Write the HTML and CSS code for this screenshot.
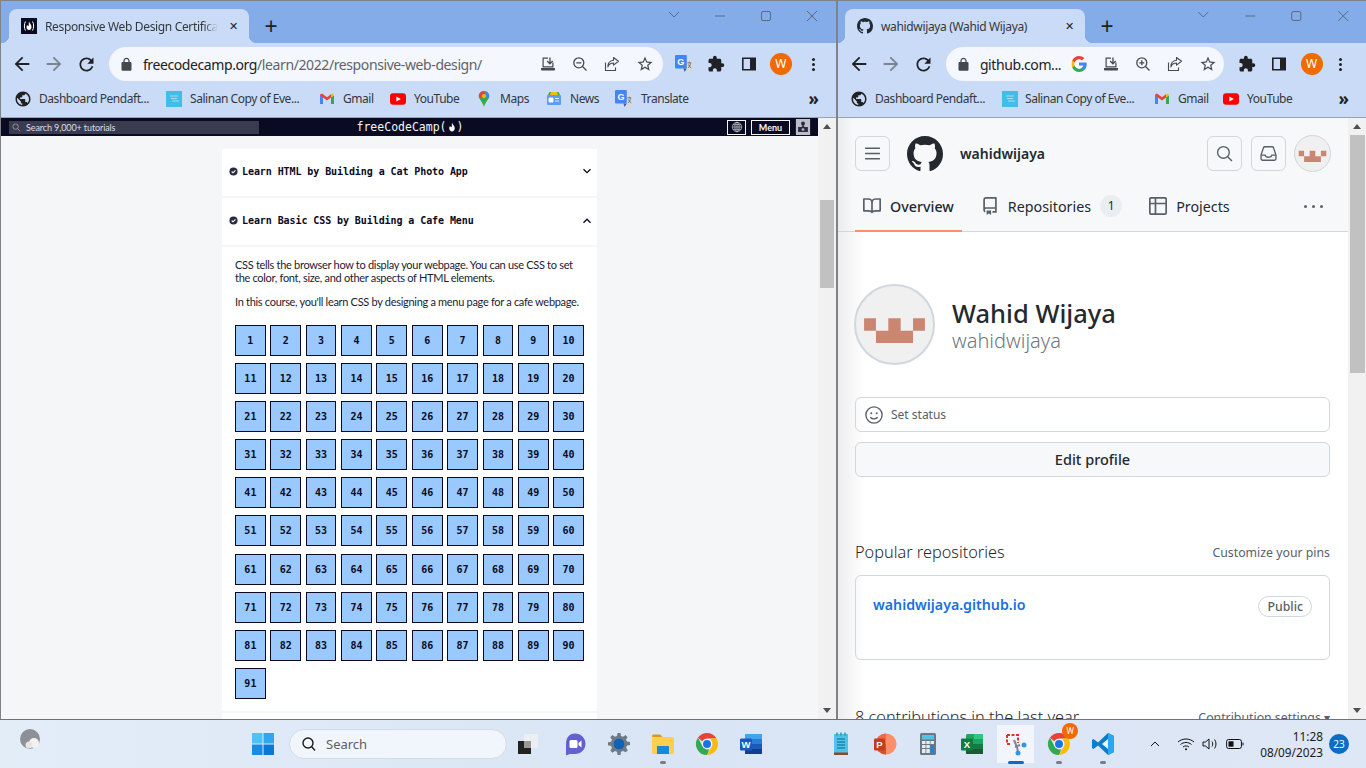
FILE: index.html
```html
<!DOCTYPE html>
<html lang="en">
  <head>
    <meta charset="utf-8" />
    <meta name="viewport" content="width=device-width, initial-scale=1" />
    <title>Desktop</title>
    <link rel="stylesheet" href="styles.css">
  </head>
  <body>
    <!-- shared icons, used by both browser windows and the taskbar -->
    <svg class="defs" aria-hidden="true">
      <symbol id="i-back" viewBox="0 0 24 24"><path d="M20 11H7.83l5.59-5.59L12 4l-8 8 8 8 1.41-1.41L7.83 13H20v-2z"/></symbol>
      <symbol id="i-forward" viewBox="0 0 24 24"><path d="M4 11h12.17l-5.59-5.59L12 4l8 8-8 8-1.41-1.41L16.17 13H4v-2z"/></symbol>
      <symbol id="i-reload" viewBox="0 0 24 24"><path d="M17.65 6.35C16.2 4.9 14.21 4 12 4c-4.42 0-7.99 3.58-7.99 8s3.57 8 7.99 8c3.73 0 6.84-2.55 7.73-6h-2.08c-.82 2.33-3.04 4-5.65 4-3.31 0-6-2.69-6-6s2.69-6 6-6c1.66 0 3.14.69 4.22 1.78L13 11h7V4l-2.35 2.35z"/></symbol>
      <symbol id="i-lock" viewBox="0 0 24 24"><path d="M18 8h-1V6c0-2.76-2.24-5-5-5S7 3.24 7 6v2H6c-1.1 0-2 .9-2 2v10c0 1.1.9 2 2 2h12c1.1 0 2-.9 2-2V10c0-1.1-.9-2-2-2zM9 6c0-1.66 1.34-3 3-3s3 1.34 3 3v2H9V6z"/></symbol>
      <symbol id="i-star" viewBox="0 0 24 24"><path d="M22 9.24l-7.19-.62L12 2 9.19 8.63 2 9.24l5.46 4.73L5.82 21 12 17.27 18.18 21l-1.63-7.03L22 9.24zM12 15.4l-3.76 2.27 1-4.28-3.32-2.88 4.38-.38L12 6.1l1.71 4.04 4.38.38-3.32 2.88 1 4.28L12 15.4z"/></symbol>
      <symbol id="i-puzzle" viewBox="0 0 24 24"><path d="M20.5 11H19V7c0-1.1-.9-2-2-2h-4V3.5C13 2.12 11.88 1 10.5 1S8 2.12 8 3.5V5H4c-1.1 0-1.99.9-1.99 2v3.8H3.5c1.49 0 2.7 1.21 2.7 2.7s-1.21 2.7-2.7 2.7H2V20c0 1.1.9 2 2 2h3.8v-1.5c0-1.49 1.21-2.7 2.7-2.7 1.49 0 2.7 1.21 2.7 2.7V22H17c1.1 0 2-.9 2-2v-4h1.5c1.38 0 2.5-1.12 2.5-2.5S21.88 11 20.5 11z"/></symbol>
      <symbol id="i-panel" viewBox="0 0 16 16"><path fill-rule="evenodd" d="M1 1.5h14v13H1zM2.6 3.1v9.8H9V3.1z"/></symbol>
      <symbol id="i-install" viewBox="0 0 16 16"><path d="M2.5 1.5H8v1.2H3.7v7.6h8.6V6.5h1.2v5H2.5z"/><path d="M1 12h14v1.2c0 .7-.5 1.3-1.2 1.3H2.2c-.7 0-1.2-.6-1.2-1.3z"/><path d="M9.3 1.5h1.3v4.7l1.6-1.6.9.9-3.2 3.2-3.2-3.2.9-.9 1.7 1.6z"/></symbol>
      <symbol id="i-zoomout" viewBox="0 0 16 16"><circle cx="6.8" cy="6.8" r="5" fill="none" stroke="currentColor" stroke-width="1.3"/><path d="M10.5 10.5l4 4M4.3 6.8h5" fill="none" stroke="currentColor" stroke-width="1.3"/></symbol>
      <symbol id="i-zoomin" viewBox="0 0 16 16"><circle cx="6.8" cy="6.8" r="5" fill="none" stroke="currentColor" stroke-width="1.3"/><path d="M10.5 10.5l4 4M4.3 6.8h5M6.8 4.3v5" fill="none" stroke="currentColor" stroke-width="1.3"/></symbol>
      <symbol id="i-share" viewBox="0 0 16 16"><path d="M1.5 6.5v8h10v-3M9.5 1.5l5 3.8-5 3.8V7C6.5 7 4.8 8.3 3.8 11c0-4 2-6.3 5.7-6.7z" fill="none" stroke="currentColor" stroke-width="1.1" stroke-linejoin="round"/></symbol>
      <symbol id="i-globe" viewBox="0 0 24 24"><path d="M12 2C6.48 2 2 6.48 2 12s4.48 10 10 10 10-4.48 10-10S17.52 2 12 2zm-1 17.93c-3.95-.49-7-3.85-7-7.93 0-.62.08-1.21.21-1.79L9 15v1c0 1.1.9 2 2 2v1.93zm6.9-2.54c-.26-.81-1-1.39-1.9-1.39h-1v-3c0-.55-.45-1-1-1H8v-2h2c.55 0 1-.45 1-1V7h2c1.1 0 2-.9 2-2v-.41c2.93 1.19 5 4.06 5 7.41 0 2.08-.8 3.97-2.1 5.39z"/></symbol>
      <symbol id="i-poster" viewBox="0 0 16 16"><rect width="16" height="16" fill="#40bde8"/><path d="M4 5h8M5 7.5h6M6 10h7" stroke="#a5e0f3" stroke-width="1"/></symbol>
      <symbol id="i-gmail" viewBox="0 0 16 16"><path d="M1 13V4l3 2v7z" fill="#4285f4"/><path d="M12 13V6l3-2v9z" fill="#34a853"/><path d="M1 4.5C1 2.8 2.7 2.2 4 3.2L8 6.2 12 3.2V6.4L8 9.4 4 6.4 1 4.5z" fill="#ea4335"/><path d="M12 3.2c1.3-1 3-.4 3 1.3L12 6.4z" fill="#fbbc04"/></symbol>
      <symbol id="i-youtube" viewBox="0 0 16 16"><rect y="2.2" width="16" height="11.6" rx="3" fill="#f00"/><path d="M6.4 5.4L10.8 8l-4.4 2.6z" fill="#fff"/></symbol>
      <symbol id="i-maps" viewBox="0 0 16 16"><path d="M8 0c3 0 5.2 2.2 5.2 5 0 3.5-3.8 5.5-5.2 11C6.6 10.500 2.800 8.500 2.800 5 2.800 2.200 5 0 8 0z" fill="#34a853"/><path d="M3.600 2.500C4.500 1 6.200 0 8 0l2 2-5.500 5.500C3.500 6.700 2.800 6 2.800 5c0-.9.300-1.800.8-2.500z" fill="#ea4335"/><path d="M10 .4c1.900.7 3.200 2.500 3.200 4.600 0 1-.3 1.800-.8 2.600L8 3z" fill="#4285f4"/><circle cx="8" cy="5" r="2" fill="#fbbc04"/></symbol>
      <symbol id="i-news" viewBox="0 0 16 16"><path d="M2 4l1.500-3h9L14 4z" fill="#34a853"/><path d="M5 1h6l1 3H4z" fill="#fbbc04"/><rect x="1" y="4" width="14" height="10" rx="1" fill="#5b9cf4"/><path d="M3 7h4v4H3zM9 7.500h4M9 10h4" fill="#fff" stroke="#fff" stroke-width=".8"/></symbol>
      <symbol id="i-translate" viewBox="0 0 16 16"><path d="M6 4h9.500v11H8z" fill="#dadada"/><rect width="10.500" height="12" rx="1" fill="#4285f4"/><text x="5.200" y="8.800" text-anchor="middle" fill="#fff" font-size="8" font-weight="700" font-family="Liberation Sans, sans-serif">G</text><path d="M7.500 12l1 3 2-3z" fill="#3b5bab"/><path d="M11 7h3.500M12.700 6v1M11.500 11.500c1.300-.8 2-2.300 2.200-4M12 8.500c.5 1.300 1.300 2.300 2.500 3" stroke="#666" stroke-width=".8" fill="none"/></symbol>
      <symbol id="i-google" viewBox="0 0 16 16"><path d="M15.700 8.200c0-.6-.1-1.100-.2-1.600H8v3h4.300c-.2 1-.7 1.800-1.600 2.400v2h2.600c1.500-1.400 2.400-3.400 2.400-5.800z" fill="#4285f4"/><path d="M8 16c2.200 0 4-.7 5.300-1.900l-2.600-2c-.7.500-1.600.8-2.700.8-2.100 0-3.900-1.400-4.500-3.300H1.300v2.100C2.600 14.300 5.100 16 8 16z" fill="#34a853"/><path d="M3.500 9.600C3.200 8.600 3.200 7.400 3.500 6.400V4.300H1.300c-.9 1.800-.9 5.600 0 7.400z" fill="#fbbc04"/><path d="M8 3.200c1.200 0 2.200.4 3 1.200l2.300-2.300C11.900.800 10.100 0 8 0 5.100 0 2.600 1.700 1.300 4.300l2.200 2.100C4.100 4.500 5.900 3.200 8 3.200z" fill="#ea4335"/></symbol>
      <symbol id="i-octocat" viewBox="0 0 16 16"><path d="M8 0C3.580 0 0 3.580 0 8c0 3.540 2.290 6.530 5.470 7.590.4.070.55-.17.55-.38 0-.19-.01-.82-.01-1.490-2.010.37-2.530-.49-2.690-.94-.09-.23-.48-.94-.82-1.130-.28-.15-.68-.52-.01-.53.63-.01 1.080.58 1.230.82.720 1.210 1.870.87 2.330.66.070-.52.280-.87.510-1.070-1.780-.2-3.640-.89-3.640-3.950 0-.87.310-1.590.820-2.150-.08-.2-.36-1.020.080-2.120 0 0 .67-.21 2.200.82.640-.18 1.320-.27 2-.27.68 0 1.360.09 2 .27 1.530-1.040 2.200-.82 2.200-.82.440 1.100.160 1.920.080 2.120.510.560.820 1.270.820 2.150 0 3.070-1.870 3.750-3.650 3.950.290.250.540.730.540 1.480 0 1.070-.01 1.930-.01 2.200 0 .21.150.46.550.38A8.013 8.013 0 0016 8c0-4.420-3.580-8-8-8z"/></symbol>
      <symbol id="i-fcc" viewBox="0 0 16 16"><rect width="16" height="16" fill="#0a0a23"/><path d="M4.500 3.500C3 5.500 3 10.500 4.500 12.500M11.500 3.500c1.500 2 1.500 7 0 9" fill="none" stroke="#fff" stroke-width="1"/><path d="M8 3.500c.5 2 2.500 3 2.500 5.500 0 1.800-1.100 3-2.500 3s-2.500-1.200-2.500-3c0-1 .5-1.800 1-2.300 0 .9.300 1.300.800 1.300C8.300 8 7.500 5.500 8 3.500z" fill="#fff"/></symbol>
      <symbol id="i-identicon" viewBox="0 0 81 81"><path d="M8.500 34H21V47H8.500zM34 34H47V47H34zM60 34H72.500V47H60zM21 47H60V60H21z" fill="#cb8671"/></symbol>
      <symbol id="i-chrome" viewBox="0 0 24 24"><path d="M12 1a11 11 0 0 1 9.500 5.500H12a5.500 5.500 0 0 0-4.800 2.800L2.900 5.800A11 11 0 0 1 12 1z" fill="#ea4335"/><path d="M21.500 6.500A11 11 0 0 1 12 23l4.800-8.300a5.500 5.500 0 0 0 0-5.400 5.500 5.500 0 0 0-2-2.800z" fill="#fbbc04"/><path d="M12 23A11 11 0 0 1 2.900 5.800l4.800 8.500a5.500 5.500 0 0 0 4.300 3.200c.8 0 1.600-.1 2.400-.5z" fill="#34a853"/><circle cx="12" cy="12" r="5" fill="#fff"/><circle cx="12" cy="12" r="4" fill="#1a73e8"/></symbol>
    </svg>

    <div class="desktop">
      <div class="windows">
        <!-- left browser window: freeCodeCamp -->
        <section class="window window-left">
          <div class="titlebar">
            <div class="tab tab-fcc">
              <svg class="tab-icon"><use href="#i-fcc"/></svg>
              <span class="tab-title">Responsive Web Design Certificat</span>
              <span class="tab-close">✕</span>
            </div>
            <span class="tab-new">+</span>
            <div class="win-controls">
              <svg class="win-btn" viewBox="0 0 46 30"><path d="M18 11l5 5 5-5"/></svg>
              <svg class="win-btn" viewBox="0 0 46 30"><path d="M18 15h10"/></svg>
              <svg class="win-btn" viewBox="0 0 46 30"><rect x="18.500" y="10.500" width="9" height="9" rx="1.500"/></svg>
              <svg class="win-btn" viewBox="0 0 46 30"><path d="M18 10l10 10M28 10l-10 10"/></svg>
            </div>
          </div>
          <div class="toolbar">
            <span class="tool"><svg class="ico-22"><use href="#i-back"/></svg></span>
            <span class="tool muted"><svg class="ico-22"><use href="#i-forward"/></svg></span>
            <span class="tool"><svg class="ico-20"><use href="#i-reload"/></svg></span>
            <div class="omnibox">
              <svg class="omni-lock"><use href="#i-lock"/></svg>
              <span class="omni-url"><b>freecodecamp.org</b>/learn/2022/responsive-web-design/</span>
              <span class="tool"><svg class="ico-16"><use href="#i-install"/></svg></span>
              <span class="tool"><svg class="ico-16"><use href="#i-zoomout"/></svg></span>
              <span class="tool"><svg class="ico-16"><use href="#i-share"/></svg></span>
              <span class="tool"><svg class="ico-18"><use href="#i-star"/></svg></span>
            </div>
            <span class="tool tool-first"><svg class="ico-18"><use href="#i-translate"/></svg></span>
            <span class="tool"><svg class="ico-18"><use href="#i-puzzle"/></svg></span>
            <span class="tool"><svg class="ico-16"><use href="#i-panel"/></svg></span>
            <span class="tool"><span class="avatar-w">W</span></span>
            <span class="tool"><span class="kebab"></span></span>
          </div>
          <div class="bookmarks">
            <span class="mark mark-globe"><svg class="ico-18"><use href="#i-globe"/></svg>Dashboard Pendaft...</span>
            <span class="mark mark-poster"><svg class="ico-16"><use href="#i-poster"/></svg>Salinan Copy of Eve...</span>
            <span class="mark mark-gmail"><svg class="ico-16"><use href="#i-gmail"/></svg>Gmail</span>
            <span class="mark mark-yt"><svg class="ico-16"><use href="#i-youtube"/></svg>YouTube</span>
            <span class="mark mark-maps"><svg class="ico-16"><use href="#i-maps"/></svg>Maps</span>
            <span class="mark mark-news"><svg class="ico-16"><use href="#i-news"/></svg>News</span>
            <span class="mark mark-tr"><svg class="ico-18"><use href="#i-translate"/></svg>Translate</span>
            <span class="marks-more">»</span>
          </div>
          <div class="page">
            <div class="fcc">
              <header class="fcc-nav">
                <div class="fcc-nav-left">
                  <div class="fcc-search">
                    <svg class="fcc-search-ico" viewBox="0 0 10 10"><circle cx="4" cy="4" r="3"/><path d="M6.300 6.300L9 9"/></svg>
                    Search 9,000+ tutorials
                  </div>
                </div>
                <div class="fcc-logo">freeCodeCamp(<svg class="fcc-flame" viewBox="0 0 10 12"><path d="M5 .5c.5 2.500 3.500 4 3.500 7 0 2.400-1.600 4-3.500 4s-3.500-1.600-3.500-4c0-1.300.7-2.300 1.300-3 0 1.200.4 1.800 1 1.800C5.500 6.300 4.500 3 5 .5z"/></svg>)</div>
                <div class="fcc-nav-right">
                  <span class="fcc-lang"><svg viewBox="0 0 14 14"><circle cx="7" cy="7" r="5.500"/><ellipse cx="7" cy="7" rx="2.500" ry="5.500"/><path d="M1.500 7h11M2.300 4.300h9.400M2.300 9.700h9.400M7 1.500v11"/></svg></span>
                  <span class="fcc-menu">Menu</span>
                  <span class="fcc-user"><svg viewBox="0 0 16 18"><rect width="16" height="18" fill="#bdbdc9"/><circle cx="8" cy="5" r="2.200" fill="#2a2a40"/><path d="M6.800 7h2.400v2H6.800zM2.500 9h11v5.500h-11z" fill="#2a2a40"/><circle cx="8" cy="11.800" r="1.500" fill="#bdbdc9"/></svg></span>
                </div>
              </header>
              <div class="fcc-body">
                <main class="panel">
                  <div class="block-head">
                    <svg class="check" viewBox="0 0 10 10"><circle cx="5" cy="5" r="4.500"/><path d="M3 5l1.500 1.500L7.200 3.700"/></svg>
                    <h4>Learn HTML by Building a Cat Photo App</h4>
                    <svg class="caret" viewBox="0 0 10 10"><path d="M1.500 3.200L5 6.700l3.500-3.500"/></svg>
                  </div>
                  <div class="block-head block-open">
                    <svg class="check" viewBox="0 0 10 10"><circle cx="5" cy="5" r="4.500"/><path d="M3 5l1.500 1.500L7.200 3.700"/></svg>
                    <h4>Learn Basic CSS by Building a Cafe Menu</h4>
                    <svg class="caret" viewBox="0 0 10 10"><path d="M1.500 6.700L5 3.200l3.500 3.500"/></svg>
                  </div>
                  <div class="block-body">
                    <p>CSS tells the browser how to display your webpage. You can use CSS to set the color, font, size, and other aspects of HTML elements.</p>
                    <p>In this course, you'll learn CSS by designing a menu page for a cafe webpage.</p>
                    <div class="steps">
                      <a>1</a><a>2</a><a>3</a><a>4</a><a>5</a><a>6</a><a>7</a><a>8</a><a>9</a><a>10</a>
                      <a>11</a><a>12</a><a>13</a><a>14</a><a>15</a><a>16</a><a>17</a><a>18</a><a>19</a><a>20</a>
                      <a>21</a><a>22</a><a>23</a><a>24</a><a>25</a><a>26</a><a>27</a><a>28</a><a>29</a><a>30</a>
                      <a>31</a><a>32</a><a>33</a><a>34</a><a>35</a><a>36</a><a>37</a><a>38</a><a>39</a><a>40</a>
                      <a>41</a><a>42</a><a>43</a><a>44</a><a>45</a><a>46</a><a>47</a><a>48</a><a>49</a><a>50</a>
                      <a>51</a><a>52</a><a>53</a><a>54</a><a>55</a><a>56</a><a>57</a><a>58</a><a>59</a><a>60</a>
                      <a>61</a><a>62</a><a>63</a><a>64</a><a>65</a><a>66</a><a>67</a><a>68</a><a>69</a><a>70</a>
                      <a>71</a><a>72</a><a>73</a><a>74</a><a>75</a><a>76</a><a>77</a><a>78</a><a>79</a><a>80</a>
                      <a>81</a><a>82</a><a>83</a><a>84</a><a>85</a><a>86</a><a>87</a><a>88</a><a>89</a><a>90</a>
                      <a>91</a>
                    </div>
                  </div>
                  <div class="block-next"></div>
                </main>
              </div>
            </div>
            <div class="scrollbar">
              <span class="sb-up"></span>
              <span class="sb-thumb sb-thumb-left"></span>
              <span class="sb-down"></span>
            </div>
          </div>
        </section>

        <!-- right browser window: GitHub profile -->
        <section class="window window-right">
          <div class="titlebar">
            <div class="tab tab-gh">
              <svg class="tab-icon"><use href="#i-octocat"/></svg>
              <span class="tab-title">wahidwijaya (Wahid Wijaya)</span>
              <span class="tab-close">✕</span>
            </div>
            <span class="tab-new">+</span>
            <div class="win-controls">
              <svg class="win-btn" viewBox="0 0 46 30"><path d="M18 11l5 5 5-5"/></svg>
              <svg class="win-btn" viewBox="0 0 46 30"><path d="M18 15h10"/></svg>
              <svg class="win-btn" viewBox="0 0 46 30"><rect x="18.500" y="10.500" width="9" height="9" rx="1.500"/></svg>
              <svg class="win-btn" viewBox="0 0 46 30"><path d="M18 10l10 10M28 10l-10 10"/></svg>
            </div>
          </div>
          <div class="toolbar">
            <span class="tool"><svg class="ico-22"><use href="#i-back"/></svg></span>
            <span class="tool muted"><svg class="ico-22"><use href="#i-forward"/></svg></span>
            <span class="tool"><svg class="ico-20"><use href="#i-reload"/></svg></span>
            <div class="omnibox omnibox-gh">
              <svg class="omni-lock"><use href="#i-lock"/></svg>
              <span class="omni-url"><b>github.com...</b></span>
              <span class="tool"><svg class="ico-16"><use href="#i-google"/></svg></span>
              <span class="tool"><svg class="ico-16"><use href="#i-install"/></svg></span>
              <span class="tool"><svg class="ico-16"><use href="#i-zoomin"/></svg></span>
              <span class="tool"><svg class="ico-16"><use href="#i-share"/></svg></span>
              <span class="tool"><svg class="ico-18"><use href="#i-star"/></svg></span>
            </div>
            <span class="tool tool-first-gh"><svg class="ico-18"><use href="#i-puzzle"/></svg></span>
            <span class="tool"><svg class="ico-16"><use href="#i-panel"/></svg></span>
            <span class="tool"><span class="avatar-w">W</span></span>
            <span class="tool tool-kebab-gh"><span class="kebab"></span></span>
          </div>
          <div class="bookmarks bookmarks-gh">
            <span class="mark mark-globe"><svg class="ico-18"><use href="#i-globe"/></svg>Dashboard Pendaft...</span>
            <span class="mark mark-poster"><svg class="ico-16"><use href="#i-poster"/></svg>Salinan Copy of Eve...</span>
            <span class="mark mark-gmail"><svg class="ico-16"><use href="#i-gmail"/></svg>Gmail</span>
            <span class="mark mark-yt"><svg class="ico-16"><use href="#i-youtube"/></svg>YouTube</span>
            <span class="marks-more">»</span>
          </div>
          <div class="page">
            <div class="gh">
              <header class="gh-head">
                <div class="gh-top">
                  <span class="gh-btn gh-burger">
                    <svg viewBox="0 0 16 16"><path d="M1 3h14M1 8h14M1 13h14"/></svg>
                  </span>
                  <svg class="gh-logo"><use href="#i-octocat"/></svg>
                  <span class="gh-user">wahidwijaya</span>
                  <span class="gh-btn gh-search">
                    <svg viewBox="0 0 16 16"><circle cx="7" cy="7" r="5.500"/><path d="M11 11l4 4"/></svg>
                  </span>
                  <span class="gh-btn gh-inbox">
                    <svg viewBox="0 0 16 16"><path d="M1 9.500V13c0 .8.600 1.300 1.300 1.300h11.400c.7 0 1.300-.5 1.300-1.300V9.500L12.700 2.500c-.2-.5-.6-.8-1.200-.8h-7c-.6 0-1 .3-1.200.8zM1 9.500h3.800c.3 1.200 1.700 2 3.200 2s2.900-.8 3.200-2H15"/></svg>
                  </span>
                  <svg class="gh-avatar-small"><use href="#i-identicon"/></svg>
                </div>
                <nav class="gh-tabs">
                  <a class="gh-tab gh-tab-on">
                    <svg viewBox="0 0 16 16"><path d="M0 1.750A.750.750 0 0 1 .750 1h4.253c1.227 0 2.317.590 3 1.501A3.743 3.743 0 0 1 11.006 1h4.245a.750.750 0 0 1 .750.750v10.500a.750.750 0 0 1-.750.750h-4.507a2.250 2.250 0 0 0-1.591.659l-.622.621a.750.750 0 0 1-1.060 0l-.622-.621A2.250 2.250 0 0 0 5.258 13H.750a.750.750 0 0 1-.750-.750Zm7.251 10.324.004-5.073-.002-2.253A2.250 2.250 0 0 0 5.003 2.500H1.500v9h3.757a3.750 3.750 0 0 1 1.994.574ZM8.755 4.750l-.004 7.322a3.752 3.752 0 0 1 1.992-.572H14.500v-9h-3.495a2.250 2.250 0 0 0-2.250 2.250Z"/></svg>
                    Overview
                  </a>
                  <a class="gh-tab">
                    <svg viewBox="0 0 16 16"><path d="M2 2.500A2.500 2.500 0 0 1 4.500 0h8.750a.750.750 0 0 1 .750.750v12.500a.750.750 0 0 1-.750.750h-2.500a.750.750 0 0 1 0-1.500h1.750v-2h-8a1 1 0 0 0-.714 1.700.750.750 0 1 1-1.072 1.050A2.495 2.495 0 0 1 2 11.500Zm10.500-1h-8a1 1 0 0 0-1 1v6.708A2.486 2.486 0 0 1 4.500 9h8ZM5 12.250a.250.250 0 0 1 .250-.250h3.500a.250.250 0 0 1 .250.250v3.250a.250.250 0 0 1-.400.200l-1.450-1.087a.249.249 0 0 0-.300 0L5.400 15.700a.250.250 0 0 1-.400-.200Z"/></svg>
                    Repositories
                    <span class="gh-count">1</span>
                  </a>
                  <a class="gh-tab">
                    <svg viewBox="0 0 16 16"><path d="M0 1.750C0 .784.784 0 1.750 0h12.500C15.216 0 16 .784 16 1.750v12.500A1.750 1.750 0 0 1 14.250 16H1.750A1.750 1.750 0 0 1 0 14.250ZM6.500 6.500v8h7.750a.250.250 0 0 0 .250-.250V6.500Zm8-1.500V1.750a.250.250 0 0 0-.250-.250H6.500V5Zm-13 1.500v7.750c0 .138.112.250.250.250H5v-8ZM5 5V1.500H1.750a.250.250 0 0 0-.250.250V5Z"/></svg>
                    Projects
                  </a>
                  <span class="gh-more"><i></i><i></i><i></i></span>
                </nav>
              </header>
              <div class="gh-main">
                <div class="gh-profile">
                  <svg class="gh-avatar"><use href="#i-identicon"/></svg>
                  <div class="gh-names">
                    <h1>Wahid Wijaya</h1>
                    <div class="gh-login">wahidwijaya</div>
                  </div>
                </div>
                <div class="gh-status">
                  <svg viewBox="0 0 16 16"><circle cx="8" cy="8" r="7.200"/><circle class="eye" cx="5.600" cy="6.500" r=".9"/><circle class="eye" cx="10.400" cy="6.500" r=".9"/><path d="M4.800 10c.8 1 1.900 1.500 3.200 1.500s2.400-.5 3.200-1.500"/></svg>
                  Set status
                </div>
                <div class="gh-edit">Edit profile</div>
                <div class="gh-section">
                  <h2>Popular repositories</h2>
                  <span>Customize your pins</span>
                </div>
                <div class="gh-card">
                  <a>wahidwijaya.github.io</a>
                  <span class="gh-badge">Public</span>
                </div>
                <div class="gh-section gh-section-contrib">
                  <h2>8 contributions in the last year</h2>
                  <span>Contribution settings ▾</span>
                </div>
              </div>
            </div>
            <div class="scrollbar scrollbar-gh">
              <span class="sb-up"></span>
              <span class="sb-thumb sb-thumb-right"></span>
              <span class="sb-down"></span>
            </div>
          </div>
        </section>
      </div>

      <!-- windows taskbar -->
      <footer class="taskbar">
        <span class="tb-weather">
          <svg viewBox="0 0 24 24" width="24" height="24"><circle cx="11" cy="11" r="10" fill="#8c9097"/><circle cx="15" cy="15" r="5" fill="#f2f2f2"/><circle cx="10" cy="17" r="3.500" fill="#e6e6e6"/></svg>
        </span>
        <div class="tb-center">
          <span class="tb-icon">
            <svg viewBox="0 0 24 24"><path d="M1 1h10.500v10.500H1z" fill="#4ec2f5"/><path d="M12.500 1H23v10.500H12.500z" fill="#2fa6ee"/><path d="M1 12.500h10.500V23H1z" fill="#1a8ce0"/><path d="M12.500 12.500H23V23H12.500z" fill="#0a78d4"/></svg>
          </span>
          <div class="tb-search">
            <svg viewBox="0 0 16 16"><circle cx="7" cy="7" r="5"/><path d="M10.500 10.500L14 14.500"/></svg>
            Search
          </div>
          <span class="tb-icon">
            <svg viewBox="0 0 24 24"><rect x="8" y="2" width="14" height="14" fill="#eceff2"/><rect x="2" y="9" width="13" height="13" fill="#222"/><rect x="8" y="9" width="7" height="7" fill="#999"/></svg>
          </span>
          <span class="tb-icon tb-gap">
            <svg viewBox="0 0 24 24"><path d="M12 1.500c6 0 10.500 4.500 10.500 10.300S18 22 12 22H7l-4 1.500V12C3 6 6 1.500 12 1.500z" fill="#6360d0"/><rect x="6.500" y="8" width="8" height="8" rx="1.500" fill="#fff"/><path d="M15.500 11l3-2.500v7l-3-2.500z" fill="#fff"/></svg>
          </span>
          <span class="tb-icon">
            <svg viewBox="0 0 24 24"><path d="M12 6a6 6 0 1 0 0 12 6 6 0 0 0 0-12z" fill="#0f62b5"/><path fill-rule="evenodd" d="M10.500 1h3l.5 3 2 .8 2.500-1.700 2.100 2.100L19 7.500l.9 2 3.100.6v3l-3 .5-.9 2.100 1.700 2.500-2.100 2.100L16 18.900l-2 .9-.5 3.200h-3l-.5-3.200-2-.9-2.600 1.800-2.100-2.100L5 16l-.9-2.100L1 13.300v-3l3.100-.6.900-2L3.300 5.200l2.100-2.100L8 4.800l2-.8zM12 6.500a5.500 5.500 0 1 0 0 11 5.500 5.500 0 0 0 0-11z" fill="#6f7a85"/></svg>
          </span>
          <span class="tb-icon tb-open">
            <svg viewBox="0 0 24 24"><path d="M1 4c0-.8.600-1.500 1.500-1.500H9L11.500 5H1z" fill="#d89a1a"/><rect x="1" y="5" width="22" height="17" rx="1.500" fill="#fdcf4d"/><rect x="6" y="14" width="12" height="8" fill="#1a87d8"/></svg>
          </span>
          <span class="tb-icon">
            <svg><use href="#i-chrome"/></svg>
          </span>
          <span class="tb-icon">
            <svg viewBox="0 0 24 24"><rect x="6" y="2" width="17" height="20" rx="1.500" fill="#2b7cd3"/><rect x="6" y="2" width="17" height="5" fill="#41a5ee"/><rect x="6" y="12" width="17" height="5" fill="#185abd"/><rect x="6" y="17" width="17" height="5" fill="#103f91"/><rect x="1" y="6.500" width="12" height="12" rx="1" fill="#185abd"/><text x="7" y="16" text-anchor="middle" fill="#fff" font-size="9.500" font-weight="700" font-family="Liberation Sans, sans-serif">W</text></svg>
          </span>
          <span class="tb-spacer"></span>
          <span class="tb-icon tb-icon-b">
            <svg viewBox="0 0 24 24"><rect x="5" y="2" width="14" height="19" fill="#4fc3e8"/><path d="M8 .5v3M12 .5v3M16 .5v3" stroke="#1a7fa6" stroke-width="1.200"/><path d="M8 7h8M8 10h8M8 13h8M8 16h8" stroke="#0b6a8c" stroke-width="1.100"/><rect x="5" y="20.500" width="14" height="2.500" fill="#8b4a26"/></svg>
          </span>
          <span class="tb-icon tb-icon-b">
            <svg viewBox="0 0 24 24"><circle cx="13" cy="12" r="10.500" fill="#ff8f6b"/><path d="M13 12V1.500a10.500 10.500 0 0 0-10.500 10.500z" fill="#ed6c47"/><path d="M13 12H2.500A10.500 10.500 0 0 0 13 22.500z" fill="#d35230"/><rect x="1" y="6.500" width="11" height="12" rx="1" fill="#c43e1c"/><text x="6.500" y="16" text-anchor="middle" fill="#fff" font-size="9.500" font-weight="700" font-family="Liberation Sans, sans-serif">P</text></svg>
          </span>
          <span class="tb-icon tb-icon-b">
            <svg viewBox="0 0 24 24"><rect x="4" y="1" width="16" height="22" rx="1.500" fill="#6e7883"/><rect x="6" y="3" width="12" height="4.500" fill="#4fc3e8"/><path d="M6 9h3.500v3H6zM10.300 9h3.500v3h-3.500zM14.500 9H18v3h-3.500zM6 13h3.500v3H6zM10.300 13h3.500v3h-3.500zM6 17h3.500v4H6zM10.300 17h3.500v4h-3.500z" fill="#e6ebef"/><path d="M14.500 13H18v8h-3.500z" fill="#1a87d8"/></svg>
          </span>
          <span class="tb-icon tb-icon-b">
            <svg viewBox="0 0 24 24"><rect x="6" y="2" width="17" height="20" rx="1.500" fill="#21a366"/><rect x="14" y="2" width="9" height="5" fill="#33c481"/><rect x="6" y="12" width="17" height="5" fill="#107c41"/><rect x="6" y="17" width="17" height="5" fill="#185c37"/><rect x="1" y="6.500" width="12" height="12" rx="1" fill="#107c41"/><text x="7" y="16" text-anchor="middle" fill="#fff" font-size="9.500" font-weight="700" font-family="Liberation Sans, sans-serif">X</text></svg>
          </span>
          <span class="tb-icon tb-icon-b tb-active">
            <svg viewBox="0 0 24 24"><path d="M3 3h11v8" fill="none" stroke="#d9362b" stroke-width="2" stroke-dasharray="3 1.500"/><path d="M3 3v9h4" fill="none" stroke="#d9362b" stroke-width="2" stroke-dasharray="3 1.500"/><path d="M10 8l3 7M16 13l-5 2M13 15l1 5" stroke="#7d8894" stroke-width="2" fill="none"/><circle cx="20" cy="13" r="2.500" fill="#2a9ae8"/><circle cx="14" cy="21" r="2.500" fill="#2a9ae8"/></svg>
          </span>
          <span class="tb-icon tb-icon-b tb-open tb-chrome-w">
            <svg><use href="#i-chrome"/></svg>
            <span class="tb-chrome-badge">W</span>
          </span>
          <span class="tb-icon tb-icon-b tb-open">
            <svg viewBox="0 0 24 24"><path d="M17 1l6 3v16l-6 3L7 13.500 2.500 17 1 16V8l1.500-1L7 10.500z" fill="#0a7cc9"/><path d="M17 1l6 3v16l-6 3z" fill="#2aa7f0"/><path d="M17 7l-6 5 6 5z" fill="#e8f4fc"/></svg>
          </span>
        </div>
        <div class="tb-tray">
          <svg class="tray-up" viewBox="0 0 12 12"><path d="M2 8l4-4 4 4"/></svg>
          <svg class="tray-wifi" viewBox="0 0 18 14"><path d="M1 5c4.500-4 11.500-4 16 0M3.500 7.500c3-2.700 8-2.700 11 0M6 10c1.700-1.400 4.300-1.400 6 0"/><circle cx="9" cy="12.300" r="1" fill="#111" stroke="none"/></svg>
          <svg class="tray-vol" viewBox="0 0 16 14"><path d="M1 5v4h2.500L7 12V2L3.500 5zM10 4.500c1 1.400 1 3.600 0 5M12.500 2.500c2 2.500 2 6.500 0 9"/></svg>
          <svg class="tray-bat" viewBox="0 0 18 12"><rect x=".6" y="1.500" width="14.800" height="9" rx="2"/><rect x="2.500" y="3.300" width="5" height="5.400" fill="#111" stroke="none"/><path d="M17 4.500v3"/></svg>
          <div class="tb-clock">
            <div>11:28</div>
            <div>08/09/2023</div>
          </div>
          <span class="tb-badge">23</span>
        </div>
      </footer>
    </div>
  </body>
</html>
```

FILE: styles.css
```css
* {
  box-sizing: border-box;
}

html,
body {
  margin: 0;
  height: 100%;
  overflow: hidden;
}

body {
  font-family: "Noto Sans", "Open Sans", sans-serif;
  color: #202124;
}

.defs {
  display: none;
}

.desktop {
  width: 1366px;
  height: 768px;
  display: flex;
  flex-direction: column;
  overflow: hidden;
}

.windows {
  display: flex;
  height: 720px;
  border-top: 1px solid #7f8286;
  border-bottom: 1px solid #6f7276;
}

.window {
  display: flex;
  flex-direction: column;
  min-width: 0;
  background: #fff;
}

.window-left {
  width: 838px;
  border-left: 1px solid #7f8286;
  border-right: 2px solid #7f8286;
}

.window-right {
  flex: 1;
}

/* browser chrome */
.titlebar {
  height: 42px;
  flex: none;
  display: flex;
  align-items: flex-end;
  background: #84ace8;
}

.tab {
  position: relative;
  height: 34px;
  width: 240px;
  display: flex;
  align-items: center;
  padding: 0 8px 0 12px;
  background: #c9dbf6;
  border-radius: 8px 8px 0 0;
}

.tab::before,
.tab::after {
  content: "";
  position: absolute;
  bottom: 0;
  width: 8px;
  height: 8px;
}

.tab::before {
  left: -8px;
  background: radial-gradient(circle at 0 0, transparent 8px, #c9dbf6 8.5px);
}

.tab::after {
  right: -8px;
  background: radial-gradient(circle at 100% 0, transparent 8px, #c9dbf6 8.5px);
}

.tab-fcc {
  margin-left: 8px;
}

.tab-gh {
  margin-left: 7px;
}

.tab-icon {
  width: 16px;
  height: 16px;
  flex: none;
  margin-right: 8px;
  color: #24292f;
  fill: currentColor;
}

/* the left title stops short of the close button and fades, as chrome does */
.tab-title {
  flex: 1;
  min-width: 0;
  font-size: 12px;
  letter-spacing: -0.35px;
  color: #34383c;
  white-space: nowrap;
  -webkit-mask-image: linear-gradient(90deg, #000 88%, transparent 96%);
  mask-image: linear-gradient(90deg, #000 88%, transparent 96%);
}

.tab-gh .tab-title {
  -webkit-mask-image: none;
  mask-image: none;
}

.tab-close {
  width: 16px;
  font-size: 11px;
  line-height: 16px;
  text-align: center;
  color: #202124;
}

.tab-new {
  width: 20px;
  height: 30px;
  margin-left: 12px;
  align-self: center;
  margin-top: 8px;
  font-size: 23px;
  line-height: 30px;
  text-align: center;
  color: #202124;
}

.win-controls {
  margin-left: auto;
  align-self: flex-start;
  display: flex;
}

.window-left .win-controls {
  padding-right: 1px;
}

.win-btn {
  width: 46px;
  height: 30px;
  fill: none;
  stroke: #5a6a84;
  stroke-width: 1;
}

.window-right .win-btn {
  width: 46.5px;
}

.toolbar {
  height: 42px;
  flex: none;
  display: flex;
  align-items: center;
  padding-left: 5px;
  background: #c9dbf6;
  color: #202124;
}

.tool {
  width: 32.3px;
  height: 32px;
  flex: none;
  display: flex;
  align-items: center;
  justify-content: center;
  fill: currentColor;
}

.muted {
  color: #7a8491;
}

.tool-first {
  margin-left: 5px;
}

.tool-first-gh {
  margin-left: 7px;
}

.tool-kebab-gh {
  margin-left: -3px;
}

.ico-16 {
  width: 16px;
  height: 16px;
}

.ico-18 {
  width: 18px;
  height: 18px;
}

.ico-20 {
  width: 21px;
  height: 21px;
}

.ico-22 {
  width: 22px;
  height: 22px;
}

.omnibox {
  margin-left: 6px;
  width: 554px;
  height: 34px;
  flex: none;
  display: flex;
  align-items: center;
  padding: 0 2px 0 10px;
  background: #f4f7fd;
  border-radius: 17px;
  color: #46494e;
}

.omnibox-gh {
  width: 278px;
  padding-right: 0;
}

.omni-lock {
  width: 15px;
  height: 15px;
  flex: none;
  fill: #44474c;
  margin-right: 9px;
}

.omni-url {
  flex: 1;
  min-width: 0;
  font-size: 14px;
  letter-spacing: -0.4px;
  color: #5f6368;
  white-space: nowrap;
}

.omni-url b {
  font-weight: 400;
  color: #202124;
}

.avatar-w {
  width: 22px;
  height: 22px;
  border-radius: 50%;
  background: #f06a00;
  color: #fff;
  font-size: 12px;
  line-height: 22px;
  text-align: center;
}

.kebab {
  width: 3px;
  height: 3px;
  border-radius: 50%;
  background: #202124;
  box-shadow: 0 -5px 0 #202124, 0 5px 0 #202124;
}

.bookmarks {
  height: 33px;
  flex: none;
  display: flex;
  align-items: center;
  padding: 0 0 5px 13px;
  background: #c9dbf6;
  border-bottom: 1px solid #97a3b5;
  position: relative;
}

.bookmarks-gh {
  padding-left: 12px;
}

.mark {
  display: flex;
  align-items: center;
  gap: 8px;
  flex: none;
  font-size: 12px;
  letter-spacing: -0.45px;
  color: #34383c;
  fill: #202124;
  white-space: nowrap;
}

.mark-globe {
  width: 152px;
  gap: 7px;
}

.mark-poster {
  width: 153px;
}

.mark-gmail {
  width: 71px;
}

.mark-yt {
  width: 86px;
}

.mark-maps {
  width: 70px;
}

.mark-news {
  width: 69px;
}

.bookmarks-gh .mark-poster {
  width: 152px;
  gap: 7px;
}

.bookmarks-gh .mark-gmail {
  width: 69px;
}

.marks-more {
  position: absolute;
  right: 17px;
  top: 2px;
  font-size: 17px;
  line-height: 24px;
  font-weight: 700;
  color: #202124;
}

.page {
  flex: 1;
  min-height: 0;
  display: flex;
}

.scrollbar {
  width: 18px;
  flex: none;
  display: flex;
  flex-direction: column;
  align-items: center;
  background: #f1f1f1;
}

.sb-up,
.sb-down {
  width: 0;
  height: 0;
  flex: none;
  border-left: 4px solid transparent;
  border-right: 4px solid transparent;
}

.sb-up {
  margin-top: 6px;
  border-bottom: 5px solid #505050;
}

.sb-down {
  margin-top: auto;
  margin-bottom: 6px;
  border-top: 5px solid #505050;
}

.sb-thumb {
  width: 14px;
  flex: none;
  background: #c1c1c1;
}

.sb-thumb-left {
  height: 88px;
  margin-top: 71px;
}

.sb-thumb-right {
  width: 15px;
  height: 238px;
  margin-top: 6px;
}

/* freeCodeCamp page */
.fcc {
  flex: 1;
  min-width: 0;
  display: flex;
  flex-direction: column;
  background: #f5f6f7;
}

.fcc-nav {
  height: 18px;
  flex: none;
  display: grid;
  grid-template-columns: 1fr auto 1fr;
  align-items: center;
  padding: 0 7px 0 8px;
  background: #0a0a23;
  color: #f5f6f7;
}

.fcc-search {
  width: 250px;
  height: 13px;
  display: flex;
  align-items: center;
  padding-left: 3px;
  background: #3b3b4f;
  font-family: Lato, sans-serif;
  font-size: 9px;
  letter-spacing: -0.1px;
  color: #dfdfe2;
}

.fcc-search-ico {
  width: 9px;
  height: 9px;
  margin-right: 5px;
  fill: none;
  stroke: #9a9aa8;
  stroke-width: 1;
}

.fcc-logo {
  display: flex;
  align-items: center;
  font-family: "DejaVu Sans Mono", monospace;
  font-size: 11.5px;
  line-height: 18px;
  white-space: nowrap;
}

.fcc-flame {
  width: 8px;
  height: 10px;
  margin: 0 1px;
  fill: #f5f6f7;
}

.fcc-nav-right {
  display: flex;
  align-items: center;
  justify-content: flex-end;
  gap: 5px;
}

.fcc-lang {
  width: 19px;
  height: 15px;
  display: flex;
  align-items: center;
  justify-content: center;
  border: 1px solid #f5f6f7;
}

.fcc-lang svg {
  width: 12px;
  height: 12px;
  fill: none;
  stroke: #d5d5da;
  stroke-width: 0.8;
}

.fcc-menu {
  width: 39px;
  height: 15px;
  border: 1px solid #f5f6f7;
  font-family: Lato, sans-serif;
  font-size: 9px;
  font-weight: 700;
  line-height: 13px;
  text-align: center;
}

.fcc-user svg {
  display: block;
  width: 16px;
  height: 16px;
}

.fcc-body {
  flex: 1;
  min-height: 0;
  overflow: hidden;
  padding-top: 13px;
}

.panel {
  width: 375px;
  margin: 0 auto;
}

.block-head {
  height: 47px;
  display: flex;
  align-items: center;
  padding: 0 0 3px 7px;
  margin-bottom: 2px;
  background: #fff;
}

.block-open {
  margin-bottom: 0;
  height: 49px;
  padding-bottom: 2px;
  border-bottom: 2px solid #f5f6f7;
}

.block-head h4 {
  margin: 0 0 0 4px;
  flex: 1;
  font-family: "DejaVu Sans Mono", monospace;
  font-size: 10px;
  font-weight: 700;
  letter-spacing: -0.08px;
  color: #0a0a23;
}

.check {
  width: 9px;
  height: 9px;
  flex: none;
  fill: #2a2a40;
}

.check path {
  fill: none;
  stroke: #fff;
  stroke-width: 1.2;
}

.caret {
  width: 10px;
  height: 10px;
  margin-right: 5px;
  fill: none;
  stroke: #0a0a23;
  stroke-width: 1.3;
}

.block-body {
  padding: 11px 13px 12px;
  background: #fff;
}

.block-body p {
  margin: 0 0 11px;
  font-family: Lato, sans-serif;
  font-size: 11px;
  line-height: 13px;
  letter-spacing: -0.3px;
  color: #1b1b32;
}

.steps {
  display: grid;
  grid-template-columns: repeat(10, 1fr);
  grid-auto-rows: 31px;
  gap: 7.1px 4.6px;
  margin-top: 17px;
  width: 349px;
}

.steps a {
  display: flex;
  align-items: center;
  justify-content: center;
  background: #99c9ff;
  border: 1px solid #0a0a23;
  font-family: "DejaVu Sans Mono", monospace;
  font-size: 10px;
  font-weight: 700;
  color: #0a0a23;
}

.block-next {
  height: 20px;
  margin-top: 2px;
  background: #fff;
}

/* github page */
.gh {
  flex: 1;
  min-width: 0;
  overflow: hidden;
  background: linear-gradient(90deg, #ededed, #fff 26px);
}

.gh-head {
  padding-top: 18px;
  background: linear-gradient(90deg, #ececec, #f6f8fa 16px);
  border-bottom: 1px solid #d0d7de;
  height: 114px;
}

.gh-top {
  display: flex;
  align-items: center;
  height: 35px;
  padding-left: 17px;
  padding-right: 17px;
}

.gh-btn {
  width: 35px;
  height: 35px;
  flex: none;
  display: flex;
  align-items: center;
  justify-content: center;
  border: 1px solid #d0d7de;
  border-radius: 6px;
}

.gh-btn svg {
  width: 17px;
  height: 17px;
  fill: none;
  stroke: #57606a;
  stroke-width: 1.3;
}

.gh-logo {
  width: 36px;
  height: 36px;
  margin-left: 17px;
  fill: #24292f;
}

.gh-user {
  flex: 1;
  margin-left: 17px;
  font-size: 14px;
  font-weight: 600;
  color: #24292f;
}

.gh-inbox {
  margin-left: 9px;
}

.gh-avatar-small {
  width: 37px;
  height: 37px;
  margin-left: 8px;
  border-radius: 50%;
  background: #f0f0f0;
  border: 1px solid #d0d7de;
}

.gh-tabs {
  display: flex;
  align-items: flex-end;
  height: 60px;
  padding-left: 17px;
  padding-right: 25px;
}

.gh-tab {
  height: 46px;
  margin-bottom: -1px;
  display: flex;
  align-items: center;
  gap: 9px;
  padding: 0 8px 4px;
  margin-right: 11px;
  border-bottom: 2px solid transparent;
  font-size: 14.3px;
  color: #24292f;
}

.gh-tab svg {
  width: 18px;
  height: 18px;
  fill: #57606a;
}

.gh-tab-on {
  border-bottom-color: #fd8c73;
  font-weight: 500;
}

.gh-count {
  width: 22px;
  height: 22px;
  border-radius: 50%;
  background: #eaeef2;
  font-size: 12px;
  line-height: 22px;
  text-align: center;
}

.gh-more {
  margin-left: auto;
  height: 46px;
  display: flex;
  align-items: center;
  gap: 5px;
  padding-bottom: 4px;
}

.gh-more i {
  width: 3px;
  height: 3px;
  border-radius: 50%;
  background: #57606a;
}

.gh-main {
  padding: 52px 18px 0 17px;
}

.gh-profile {
  display: flex;
  align-items: center;
  gap: 17px;
}

.gh-names {
  padding-top: 2px;
}

.gh-avatar {
  width: 81px;
  height: 81px;
  flex: none;
  margin-left: -1px;
  border-radius: 50%;
  background: #f0f0f0;
  border: 2px solid #d0d7de;
}

.gh-profile h1 {
  margin: 0;
  font-size: 25.5px;
  font-weight: 500;
  line-height: 31px;
  color: #24292f;
}

.gh-login {
  font-size: 20px;
  font-weight: 300;
  line-height: 24px;
  color: #6e7781;
}

.gh-status {
  margin-top: 32px;
  height: 35px;
  display: flex;
  align-items: center;
  gap: 8px;
  padding-left: 9px;
  border: 1px solid #d0d7de;
  border-radius: 6px;
  font-size: 12px;
  color: #57606a;
}

.gh-status svg {
  width: 18px;
  height: 18px;
  fill: none;
  stroke: #57606a;
  stroke-width: 1.2;
}

.gh-status .eye {
  fill: #57606a;
  stroke: none;
}

.gh-edit {
  margin-top: 10px;
  height: 35px;
  border: 1px solid #d0d7de;
  border-radius: 6px;
  background: #f6f8fa;
  font-size: 14.5px;
  font-weight: 500;
  line-height: 33px;
  text-align: center;
  color: #24292f;
}

.gh-section {
  margin-top: 63px;
  height: 24px;
  display: flex;
  align-items: center;
  justify-content: space-between;
}

.gh-section h2 {
  margin: 0;
  font-size: 16.3px;
  font-weight: 300;
  color: #24292f;
}

.gh-section span {
  font-size: 12.3px;
  color: #57606a;
}

.gh-card {
  margin-top: 11px;
  height: 85px;
  display: flex;
  justify-content: space-between;
  align-items: flex-start;
  padding: 19px 17px 0;
  border: 1px solid #d0d7de;
  border-radius: 6px;
}

.gh-card a {
  font-size: 14.2px;
  font-weight: 600;
  color: #1a6fdf;
}

.gh-badge {
  height: 21px;
  margin-top: 1px;
  padding: 0 8px;
  border: 1px solid #d0d7de;
  border-radius: 11px;
  font-size: 12.3px;
  font-weight: 500;
  line-height: 19px;
  color: #57606a;
}

.gh-section-contrib {
  margin-top: 45px;
}

/* taskbar */
.taskbar {
  flex: 1;
  position: relative;
  display: flex;
  background: linear-gradient(90deg, #e3edf8, #d9e4f5 50%, #dde7f6);
}

.tb-weather {
  width: 241px;
  flex: none;
  padding: 8px 0 0 19px;
}

.tb-center {
  display: flex;
  align-items: center;
}

.tb-icon {
  position: relative;
  width: 44px;
  height: 48px;
  flex: none;
  display: flex;
  align-items: center;
  justify-content: center;
}

.tb-icon-b {
  width: 43.7px;
}

.tb-icon svg {
  width: 24px;
  height: 24px;
}

.tb-gap {
  margin-left: 3px;
}

.tb-spacer {
  width: 46px;
}

.tb-open::after {
  content: "";
  position: absolute;
  left: 50%;
  bottom: 4px;
  width: 6px;
  height: 3px;
  margin-left: -3px;
  border-radius: 2px;
  background: #7a7d82;
}

.tb-active {
  background: linear-gradient(#f2f5fb, #f2f5fb) center 5px / 37px 38px no-repeat;
}

.tb-active::after {
  content: "";
  position: absolute;
  left: 50%;
  bottom: 4px;
  width: 16px;
  height: 3px;
  margin-left: -8px;
  border-radius: 2px;
  background: #0a6cc4;
}

.tb-chrome-badge {
  position: absolute;
  top: 3px;
  right: 3px;
  width: 16px;
  height: 16px;
  border-radius: 50%;
  background: #f06a00;
  color: #fff;
  font-size: 8px;
  line-height: 16px;
  text-align: center;
}

.tb-search {
  width: 218px;
  height: 30px;
  margin-left: 4px;
  margin-right: -1px;
  display: flex;
  align-items: center;
  gap: 9px;
  padding-left: 11px;
  background: #f1f6fd;
  border: 1px solid #d3dbe6;
  border-radius: 15px;
  font-size: 13px;
  color: #5c6066;
}

.tb-search svg {
  width: 16px;
  height: 16px;
  fill: none;
  stroke: #1a1a1a;
  stroke-width: 1.4;
}

.tb-tray {
  margin-left: auto;
  display: flex;
  align-items: center;
  padding-right: 17px;
}

.tb-tray svg {
  fill: none;
  stroke: #111;
  stroke-width: 1;
}

.tray-up {
  width: 12px;
  height: 12px;
}

.tray-wifi {
  width: 18px;
  height: 14px;
  margin-left: 16px;
}

.tray-vol {
  width: 16px;
  height: 14px;
  margin-left: 7px;
}

.tray-bat {
  width: 18px;
  height: 12px;
  margin-left: 8px;
}

.tb-clock {
  margin-left: 14px;
  width: 65px;
  font-size: 11.8px;
  line-height: 16.5px;
  text-align: right;
  color: #1a1a1a;
}

.tb-badge {
  width: 20px;
  height: 20px;
  margin-left: 6px;
  border-radius: 50%;
  background: #0a6cc4;
  color: #fff;
  font-size: 10px;
  line-height: 20px;
  text-align: center;
}
```
